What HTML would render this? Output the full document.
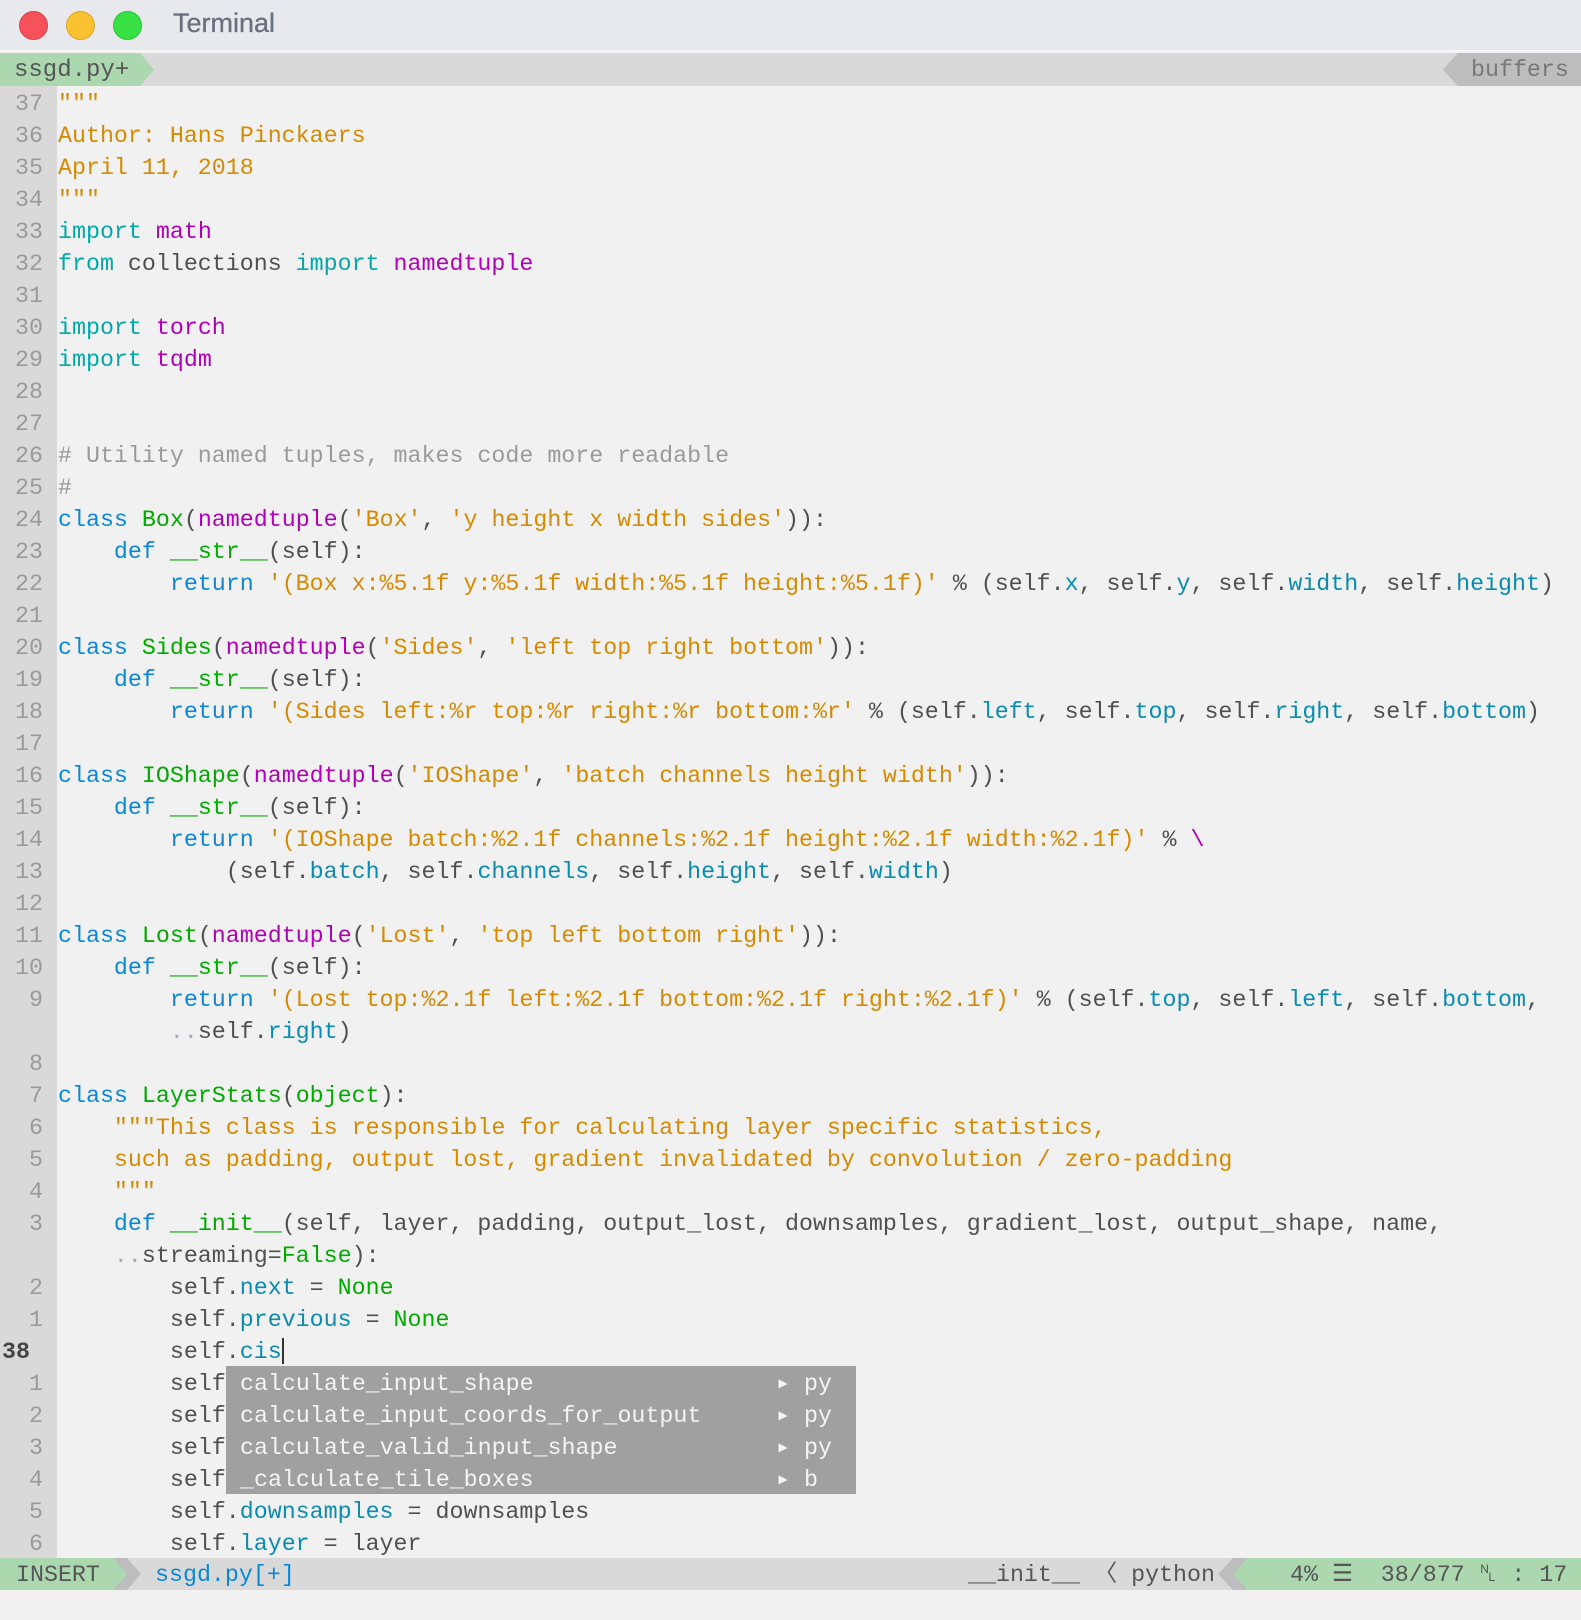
<!DOCTYPE html>
<html><head><meta charset="utf-8"><style>
*{margin:0;padding:0;box-sizing:border-box}
body{width:1581px;height:1620px;background:#f1f1f1;position:relative;overflow:hidden;font-family:"Liberation Mono",monospace;font-size:23.3px;color:#505050}
#title{position:absolute;left:0;top:0;width:1581px;height:52px;background:#e8e9ec;border-bottom:2px solid #f6f6f8}
.dot{position:absolute;top:11px;width:29px;height:29px;border-radius:50%}
#ttl{position:absolute;left:173px;top:8px;font-family:"Liberation Sans",sans-serif;font-size:27px;color:#6b7080;font-weight:500;-webkit-text-stroke:0.3px #6b7080}
#tab{position:absolute;left:0;top:53px;width:1581px;height:33px;background:#d9d9d9}
.row{position:absolute;left:0;height:32px;width:1581px;white-space:pre;line-height:32px}
.ln{position:absolute;left:0;width:57px;height:32px;background:#d9d9d9;color:#9a9a9a;text-align:right;padding-right:14px;padding-top:2px}
.cd{position:absolute;left:58px;top:2px}
.k{color:#0a88d8}.i{color:#00a8a8}.m{color:#b000b8}.s{color:#d68a00}.g{color:#00aa00}.a{color:#0a8cb0}.c{color:#9a9a9a}.d{color:#aab}
#pop{position:absolute;left:226px;top:1366px;width:630px;height:128px;background:#a0a0a0;color:#f4f4f4}
#pop div{position:absolute;height:32px;line-height:32px;white-space:pre;top:2px}
#st{position:absolute;left:0;top:1558px;width:1581px;height:32px;background:#d9d9d9;line-height:32px;white-space:pre}
</style></head><body>
<div id="title">
<div class="dot" style="left:19px;background:#f5515a;border:1px solid #d9434b"></div>
<div class="dot" style="left:66px;background:#fbc12f;border:1px solid #dca52a"></div>
<div class="dot" style="left:113px;background:#38e044;border:1px solid #2cc23a"></div>
<div id="ttl">Terminal</div>
</div>
<div id="tab">
<div style="position:absolute;left:0;top:0;width:140px;height:33px;background:#acd8b0"></div>
<svg style="position:absolute;left:140px;top:0" width="16" height="33"><polygon points="0,0 14,16.5 0,33" fill="#acd8b0"/></svg>
<div style="position:absolute;left:14px;top:1px;line-height:33px;color:#555;font-size:24px">ssgd.py+</div>
<svg style="position:absolute;left:1443px;top:0" width="15" height="33"><polygon points="15,0 0,16.5 15,33" fill="#bdbdbd"/></svg>
<div style="position:absolute;left:1457px;top:0;width:124px;height:33px;background:#bdbdbd;color:#777;line-height:35px;padding-left:14px">buffers</div>
</div>

<div class="row" style="top:86px"><span class="ln">37</span><span class="cd s">"""</span></div>
<div class="row" style="top:118px"><span class="ln">36</span><span class="cd s">Author: Hans Pinckaers</span></div>
<div class="row" style="top:150px"><span class="ln">35</span><span class="cd s">April 11, 2018</span></div>
<div class="row" style="top:182px"><span class="ln">34</span><span class="cd s">"""</span></div>
<div class="row" style="top:214px"><span class="ln">33</span><span class="cd"><span class="i">import</span> <span class="m">math</span></span></div>
<div class="row" style="top:246px"><span class="ln">32</span><span class="cd"><span class="i">from</span> collections <span class="i">import</span> <span class="m">namedtuple</span></span></div>
<div class="row" style="top:278px"><span class="ln">31</span></div>
<div class="row" style="top:310px"><span class="ln">30</span><span class="cd"><span class="i">import</span> <span class="m">torch</span></span></div>
<div class="row" style="top:342px"><span class="ln">29</span><span class="cd"><span class="i">import</span> <span class="m">tqdm</span></span></div>
<div class="row" style="top:374px"><span class="ln">28</span></div>
<div class="row" style="top:406px"><span class="ln">27</span></div>
<div class="row" style="top:438px"><span class="ln">26</span><span class="cd c"># Utility named tuples, makes code more readable</span></div>
<div class="row" style="top:470px"><span class="ln">25</span><span class="cd c">#</span></div>
<div class="row" style="top:502px"><span class="ln">24</span><span class="cd"><span class="k">class</span> <span class="g">Box</span>(<span class="m">namedtuple</span>(<span class="s">'Box'</span>, <span class="s">'y height x width sides'</span>)):</span></div>
<div class="row" style="top:534px"><span class="ln">23</span><span class="cd">    <span class="k">def</span> <span class="g">__str__</span>(self):</span></div>
<div class="row" style="top:566px"><span class="ln">22</span><span class="cd">        <span class="k">return</span> <span class="s">'(Box x:%5.1f y:%5.1f width:%5.1f height:%5.1f)'</span> % (self.<span class="a">x</span>, self.<span class="a">y</span>, self.<span class="a">width</span>, self.<span class="a">height</span>)</span></div>
<div class="row" style="top:598px"><span class="ln">21</span></div>
<div class="row" style="top:630px"><span class="ln">20</span><span class="cd"><span class="k">class</span> <span class="g">Sides</span>(<span class="m">namedtuple</span>(<span class="s">'Sides'</span>, <span class="s">'left top right bottom'</span>)):</span></div>
<div class="row" style="top:662px"><span class="ln">19</span><span class="cd">    <span class="k">def</span> <span class="g">__str__</span>(self):</span></div>
<div class="row" style="top:694px"><span class="ln">18</span><span class="cd">        <span class="k">return</span> <span class="s">'(Sides left:%r top:%r right:%r bottom:%r'</span> % (self.<span class="a">left</span>, self.<span class="a">top</span>, self.<span class="a">right</span>, self.<span class="a">bottom</span>)</span></div>
<div class="row" style="top:726px"><span class="ln">17</span></div>
<div class="row" style="top:758px"><span class="ln">16</span><span class="cd"><span class="k">class</span> <span class="g">IOShape</span>(<span class="m">namedtuple</span>(<span class="s">'IOShape'</span>, <span class="s">'batch channels height width'</span>)):</span></div>
<div class="row" style="top:790px"><span class="ln">15</span><span class="cd">    <span class="k">def</span> <span class="g">__str__</span>(self):</span></div>
<div class="row" style="top:822px"><span class="ln">14</span><span class="cd">        <span class="k">return</span> <span class="s">'(IOShape batch:%2.1f channels:%2.1f height:%2.1f width:%2.1f)'</span> % <span class="m">\</span></span></div>
<div class="row" style="top:854px"><span class="ln">13</span><span class="cd">            (self.<span class="a">batch</span>, self.<span class="a">channels</span>, self.<span class="a">height</span>, self.<span class="a">width</span>)</span></div>
<div class="row" style="top:886px"><span class="ln">12</span></div>
<div class="row" style="top:918px"><span class="ln">11</span><span class="cd"><span class="k">class</span> <span class="g">Lost</span>(<span class="m">namedtuple</span>(<span class="s">'Lost'</span>, <span class="s">'top left bottom right'</span>)):</span></div>
<div class="row" style="top:950px"><span class="ln">10</span><span class="cd">    <span class="k">def</span> <span class="g">__str__</span>(self):</span></div>
<div class="row" style="top:982px"><span class="ln">9</span><span class="cd">        <span class="k">return</span> <span class="s">'(Lost top:%2.1f left:%2.1f bottom:%2.1f right:%2.1f)'</span> % (self.<span class="a">top</span>, self.<span class="a">left</span>, self.<span class="a">bottom</span>,</span></div>
<div class="row" style="top:1014px"><span class="ln"></span><span class="cd">        <span class="d">..</span>self.<span class="a">right</span>)</span></div>
<div class="row" style="top:1046px"><span class="ln">8</span></div>
<div class="row" style="top:1078px"><span class="ln">7</span><span class="cd"><span class="k">class</span> <span class="g">LayerStats</span>(<span class="g">object</span>):</span></div>
<div class="row" style="top:1110px"><span class="ln">6</span><span class="cd">    <span class="s">"""This class is responsible for calculating layer specific statistics,</span></span></div>
<div class="row" style="top:1142px"><span class="ln">5</span><span class="cd">    <span class="s">such as padding, output lost, gradient invalidated by convolution / zero-padding</span></span></div>
<div class="row" style="top:1174px"><span class="ln">4</span><span class="cd">    <span class="s">"""</span></span></div>
<div class="row" style="top:1206px"><span class="ln">3</span><span class="cd">    <span class="k">def</span> <span class="g">__init__</span>(self, layer, padding, output_lost, downsamples, gradient_lost, output_shape, name,</span></div>
<div class="row" style="top:1238px"><span class="ln"></span><span class="cd">    <span class="d">..</span>streaming=<span class="g">False</span>):</span></div>
<div class="row" style="top:1270px"><span class="ln">2</span><span class="cd">        self.<span class="a">next</span> = <span class="g">None</span></span></div>
<div class="row" style="top:1302px"><span class="ln">1</span><span class="cd">        self.<span class="a">previous</span> = <span class="g">None</span></span></div>
<div class="row" style="top:1334px"><span class="ln" style="text-align:left;padding-left:2px;color:#444;font-weight:bold">38</span><span class="cd">        self.<span class="a">cis</span></span><span style="position:absolute;left:282px;top:4px;width:2px;height:26px;background:#333"></span></div>
<div class="row" style="top:1366px"><span class="ln">1</span><span class="cd">        self.<span class="a">input_shape</span></span></div>
<div class="row" style="top:1398px"><span class="ln">2</span><span class="cd">        self.<span class="a">output</span></span></div>
<div class="row" style="top:1430px"><span class="ln">3</span><span class="cd">        self.<span class="a">padding</span></span></div>
<div class="row" style="top:1462px"><span class="ln">4</span><span class="cd">        self.<span class="a">output_lost</span></span></div>
<div class="row" style="top:1494px"><span class="ln">5</span><span class="cd">        self.<span class="a">downsamples</span> = downsamples</span></div>
<div class="row" style="top:1526px"><span class="ln">6</span><span class="cd">        self.<span class="a">layer</span> = layer</span></div>

<div id="pop">
<div style="left:0;top:2px"> calculate_input_shape</div><div style="left:550px;top:2px">▸ py</div>
<div style="left:0;top:34px"> calculate_input_coords_for_output</div><div style="left:550px;top:34px">▸ py</div>
<div style="left:0;top:66px"> calculate_valid_input_shape</div><div style="left:550px;top:66px">▸ py</div>
<div style="left:0;top:98px"> _calculate_tile_boxes</div><div style="left:550px;top:98px">▸ b</div>
</div>

<div id="st">
<div style="position:absolute;left:0;top:0;width:113px;height:32px;background:#acd8b0;color:#555;padding-left:16px;line-height:34px">INSERT</div>
<svg style="position:absolute;left:113px;top:0" width="30" height="32"><polygon points="0,0 14,0 28,16 14,32 0,32 14,16" fill="#bdbdbd"/><polygon points="0,0 14,16 0,32" fill="#acd8b0"/></svg>
<div style="position:absolute;left:155px;top:1px;color:#0a88d8">ssgd.py[+]</div>
<div style="position:absolute;left:968px;top:1px;color:#555">__init__ 〈 python</div>
<svg style="position:absolute;left:1218px;top:0" width="30" height="32"><polygon points="15,0 30,0 30,32 15,32 0,16" fill="#bdbdbd"/><polygon points="30,0 15,16 30,32" fill="#acd8b0"/></svg>
<div style="position:absolute;left:1246px;top:0;width:335px;height:32px;background:#acd8b0;color:#555;padding-left:44px;line-height:34px">4% ☰  38/877 ␤ : 17</div>
</div>
</body></html>
